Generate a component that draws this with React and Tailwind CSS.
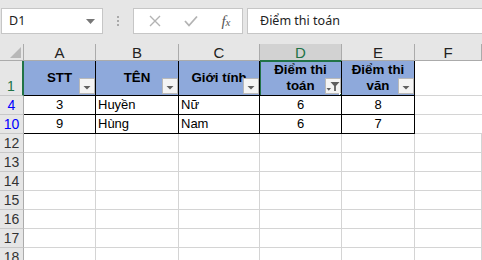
import React from 'react';

const COLS = ['w-[72px]', 'w-[83px]', 'w-[81px]', 'w-[82px]', 'w-[73px]', 'flex-1'];
const ALIGN = ['justify-center', 'justify-start pl-[2px]', 'justify-start pl-[2px]', 'justify-center', 'justify-center'];

const HEADERS = ['STT', 'TÊN', 'Giới tính', 'Điểm thi\ntoán', 'Điểm thi\nvăn'];

const DATA = [
  { n: '4', cells: ['3', 'Huyền', 'Nữ', '6', '8'] },
  { n: '10', cells: ['9', 'Hùng', 'Nam', '6', '7'] },
];

const EMPTY = ['12', '13', '14', '15', '16', '17', '18'];

const FilterButton = ({ active }) => (
  <div className="absolute right-0 bottom-[1px] w-[16px] h-[16px] bg-[#f4f4f4] border border-[#b9b9b9] flex items-center justify-center">
    {active ? (
      <svg width="14" height="14" viewBox="0 0 14 14">
        <path d="M0.5 9h4.5l-2.25 2.7z" fill="#5f5f5f" />
        <path d="M4.5 3h9l-3.6 4v5h-1.8v-5z" fill="#5f5f5f" />
      </svg>
    ) : (
      <svg width="14" height="14" viewBox="0 0 14 14">
        <path d="M3.5 7h7l-3.5 3.5z" fill="#606060" />
      </svg>
    )}
  </div>
);

const RowHead = ({ label, color, selected, h }) => (
  <div
    className={`w-[24px] shrink-0 ${h} flex items-end justify-center text-[14px] leading-[17px] bg-[#e6e6e6] border-b border-b-[#c8c8c8] ${
      selected ? 'border-r-2 border-r-[#217346]' : 'border-r border-r-[#ababab]'
    } ${color}`}
  >
    {label}
  </div>
);

export default function App() {
  return (
    <div className="w-[482px] h-[260px] overflow-hidden bg-white font-['Liberation_Sans',Arial,sans-serif] text-black">
      {/* Formula bar */}
      <div className="h-[44px] bg-[#e6e6e6] flex items-start pt-[8px] pl-[1px]">
        <div className="w-[102px] h-[26px] bg-white border border-[#c6c6c6] flex items-center justify-between pl-[7px] pr-[7px] font-['Noto_Sans',sans-serif] text-[12.5px] text-[#222]">
          <span>D1</span>
          <svg width="9" height="5" viewBox="0 0 9 5">
            <path d="M0 0h9l-4.5 5z" fill="#777" />
          </svg>
        </div>
        <div className="w-[30px] h-[26px] flex flex-col items-center justify-center gap-[2px]">
          <span className="w-[2px] h-[2px] bg-[#a9a9a9]" />
          <span className="w-[2px] h-[2px] bg-[#a9a9a9]" />
          <span className="w-[2px] h-[2px] bg-[#a9a9a9]" />
        </div>
        <div className="w-[110px] h-[26px] bg-white border border-[#c6c6c6] flex items-center justify-around pl-[4px]">
          <svg width="12" height="12" viewBox="0 0 12 12">
            <path d="M1 1l10 10M11 1L1 11" stroke="#b3b3b3" strokeWidth="1.4" />
          </svg>
          <svg width="14" height="12" viewBox="0 0 14 12">
            <path d="M1 6l4 4.5L13 1.5" stroke="#b3b3b3" strokeWidth="1.8" fill="none" />
          </svg>
          <span className="font-['Liberation_Serif',serif] italic text-[15px] text-[#555] leading-none">
            f<span className="text-[11px]">x</span>
          </span>
        </div>
        <div className="flex-1 ml-[4px] mr-[-2px] h-[26px] bg-white border border-[#c6c6c6] flex items-center pl-[12px] font-['Noto_Sans',sans-serif] text-[12.5px] text-[#222]">
          Điểm thi toán
        </div>
      </div>

      {/* Column headers */}
      <div className="flex h-[17px]">
        <div className="w-[24px] shrink-0 relative bg-[#e6e6e6] border-r border-b border-[#ababab]">
          <svg className="absolute right-[2px] bottom-[2px]" width="11" height="11" viewBox="0 0 11 11">
            <path d="M11 0v11H0z" fill="#b8b8b8" />
          </svg>
        </div>
        {['A', 'B', 'C', 'D', 'E', 'F'].map((l, i) => (
          <div
            key={l}
            className={`${COLS[i]} shrink-0 flex items-center justify-center text-[15px] leading-none border-r border-b border-[#ababab] ${
              i === 3 ? 'bg-[#d2d2d2] text-[#217346] border-b-[#217346]' : 'bg-[#e6e6e6] text-[#222]'
            }`}
          >
            {l}
          </div>
        ))}
      </div>

      {/* Row 1 - table header */}
      <div className="flex">
        <RowHead label="1" color="text-[#217346]" selected h="h-[35px]" />
        {HEADERS.map((t, i) => (
          <div
            key={t}
            className={`${COLS[i]} shrink-0 h-[35px] relative flex items-center justify-center bg-[#8ea9db] border-r border-b border-black text-[13.3px] font-bold leading-[16px] text-center whitespace-pre overflow-hidden`}
          >
            {t}
            <FilterButton active={i === 3} />
            {i === 3 && (
              <div className="absolute -left-[1px] -top-[1px] -right-[2px] -bottom-[2px] border-2 border-[#217346]">
                <span className="absolute -right-[4px] -bottom-[4px] w-[6px] h-[6px] bg-[#217346] border border-white" />
              </div>
            )}
          </div>
        ))}
        <div className="flex-1 h-[35px] border-b border-[#d4d4d4]" />
      </div>

      {/* Data rows */}
      {DATA.map((r) => (
        <div key={r.n} className="flex">
          <RowHead label={r.n} color="text-[#0000ff]" h="h-[19px]" />
          {r.cells.map((c, i) => (
            <div
              key={i}
              className={`${COLS[i]} shrink-0 h-[19px] flex items-center ${ALIGN[i]} border-r border-b border-black text-[13px]`}
            >
              {c}
            </div>
          ))}
          <div className="flex-1 h-[19px] border-b border-[#d4d4d4]" />
        </div>
      ))}

      {/* Empty rows */}
      {EMPTY.map((n) => (
        <div key={n} className="flex">
          <RowHead label={n} color="text-[#333]" h="h-[19px]" />
          {COLS.map((w, i) => (
            <div key={i} className={`${w} shrink-0 h-[19px] border-r border-b border-[#d4d4d4]`} />
          ))}
        </div>
      ))}
    </div>
  );
}
